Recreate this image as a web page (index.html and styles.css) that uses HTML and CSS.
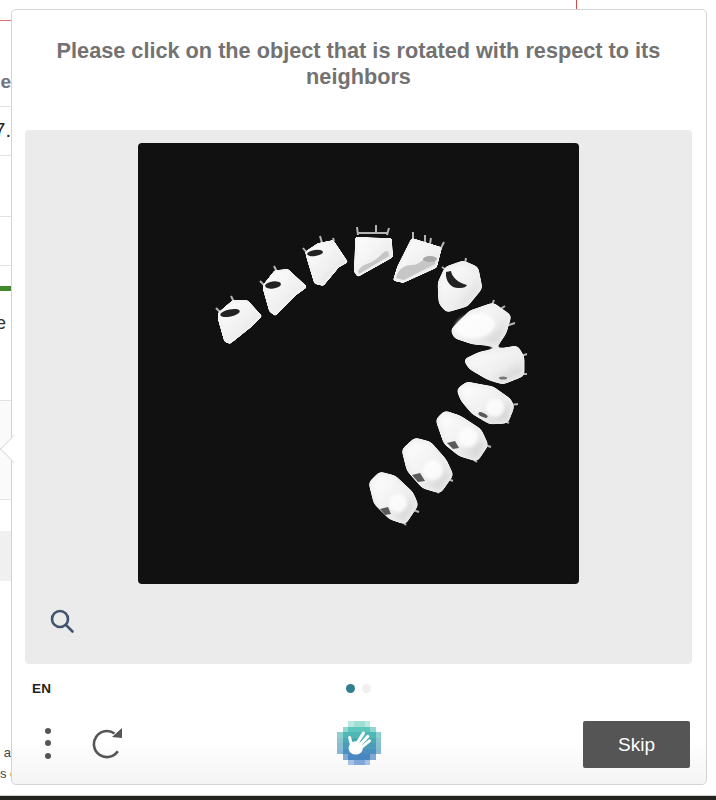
FILE: index.html
```html
<!DOCTYPE html>
<html lang="en">
<head>
    <meta charset="UTF-8">
    <meta name="viewport" content="width=device-width, initial-scale=1.0">
    <title>Challenge</title>
    <link rel="stylesheet" href="styles.css">
</head>
<body>
    <!-- page behind the dialog, only its left edge shows -->
    <div class="backdrop">
        <div class="row row-red"></div>
        <div class="row row-title"><span>Name</span></div>
        <div class="row row-value"><span>17.</span></div>
        <div class="row row-blank"></div>
        <div class="row row-blank2"></div>
        <div class="row-green"></div>
        <div class="row row-text"><span>are</span></div>
        <div class="row row-soft"></div>
        <div class="row row-gap"></div>
        <div class="row row-grey"></div>
        <div class="row-foot">
            <p>a</p>
            <p>s e</p>
        </div>
    </div>
    <div class="red-tick"></div>
    <div class="bottom-bar"></div>

    <div class="dialog">
        <div class="arrow"></div>
        <h1 class="prompt">Please click on the object that is rotated with respect to its neighbors</h1>

        <div class="panel">
            <svg class="picture" viewBox="138 143 441 441" width="441" height="441">
                <defs>
                    <linearGradient id="shade" x1="0" y1="0" x2="1" y2="1">
                        <stop offset="0" stop-color="#ffffff"/>
                        <stop offset="0.6" stop-color="#efefef"/>
                        <stop offset="1" stop-color="#c4c4c4"/>
                    </linearGradient>
                    <filter id="round-sm" x="-5%" y="-5%" width="110%" height="110%">
                        <feGaussianBlur stdDeviation="1.1"/>
                        <feComponentTransfer>
                            <feFuncA type="linear" slope="8" intercept="-3.5"/>
                        </feComponentTransfer>
                        <feGaussianBlur stdDeviation="0.5"/>
                    </filter>
                    <filter id="round-lg" x="-5%" y="-5%" width="110%" height="110%">
                        <feGaussianBlur stdDeviation="2.6"/>
                        <feComponentTransfer>
                            <feFuncA type="linear" slope="10" intercept="-4.5"/>
                        </feComponentTransfer>
                        <feGaussianBlur stdDeviation="0.5"/>
                    </filter>
                    <filter id="soft" x="-5%" y="-5%" width="110%" height="110%">
                        <feGaussianBlur stdDeviation="0.7"/>
                    </filter>
                    <filter id="softer" x="-5%" y="-5%" width="110%" height="110%">
                        <feGaussianBlur stdDeviation="1.6"/>
                    </filter>
                </defs>
                <!-- pins -->
                <g filter="url(#soft)" stroke="#b4b4b4" stroke-width="2" fill="none">
                    <path d="M216 308l4 4M231 296l3 6"/>
                    <path d="M260 281l4 4M274 266l3 6"/>
                    <path d="M303 248l4 5M320 236l2 7M333 238l1 3"/>
                    <path d="M357 227l1 8M376 225v8M389 228l-2 7M358 233h29"/>
                    <path d="M413 232v7M425 235v8M431 238l-1 6M444 242l-3 6"/>
                    <path d="M466 258l-1 6M442 267l4 3"/>
                    <path d="M505 306l-6 4M515 323l-6 2M494 300l-2 5"/>
                    <path d="M527 354l-6 2M527 374h-6"/>
                    <path d="M518 404l-7 1M509 423l-4-2"/>
                    <path d="M491 447l-6-2M477 462l-4-3"/>
                    <path d="M453 481l-5-2M439 493l-3-3"/>
                    <path d="M419 512l-6-2M406 525l-3-3"/>
                </g>
                <!-- bodies -->
                <g filter="url(#round-sm)" fill="url(#shade)" stroke="#f2f2f2" stroke-width="2" stroke-linejoin="round">
                    <polygon points="219,313 233,301 247,301 261,316 250,327 230,343 225,341 219,320"/>
                    <polygon points="264,285 275,271 288,270 306,287 295,295 275,315 270,311 264,290"/>
                    <polygon points="306,252 318,244 333,241 347,262 338,267 323,285 315,283 308,260"/>
                    <polygon points="356,238 391,239 392,257 358,276 355,272"/>
                    <polygon points="412,239 441,248 436,267 403,282 394,280 398,267"/>
                </g>
                <g filter="url(#round-lg)" fill="url(#shade)" stroke="#ededed" stroke-width="3" stroke-linejoin="round">
                    <polygon points="446,268 463,262 477,268 481,288 467,305 447,311 440,303 439,283"/>
                    <polygon points="452,330 470,312 493,304 510,316 505,333 497,345 473,343 455,337"/>
                    <polygon points="465,360 480,353 517,347 523,357 523,375 503,383 487,378 470,368"/>
                    <polygon points="458,390 467,383 493,388 510,400 513,407 507,422 490,423 473,413 462,400"/>
                    <polygon points="437,420 445,412 460,417 480,430 487,445 477,460 460,455 445,443"/>
                    <polygon points="403,450 415,439 430,443 445,460 452,475 440,492 423,487 408,470"/>
                    <polygon points="370,483 380,473 395,477 412,493 417,505 405,523 390,518 375,503"/>
                </g>
                <!-- holes and shading -->
                <g filter="url(#soft)" fill="#222222">
                    <ellipse cx="230" cy="313" rx="10" ry="3.5" transform="rotate(-12 230 313)"/>
                    <ellipse cx="273" cy="285" rx="8" ry="3.5" transform="rotate(-8 273 285)"/>
                    <ellipse cx="315" cy="253" rx="8" ry="3" transform="rotate(-8 315 253)"/>
                    <path d="M446 272C445 282 452 289 460 288 464 288 466 287 467 285 458 283 452 277 451 271Z"/>
                </g>
                <g filter="url(#soft)" fill="#c6c6c6">
                    <path d="M358 271c5-8 10-6 17-11s8-9 13-9l1 5-30 18z"/>
                    <path d="M396 278c2-9 8-13 16-13s12-8 18-9c5 0 6 5 5 8l-31 16z"/>
                    <ellipse cx="430" cy="259" rx="7" ry="3" fill="#a8a8a8"/>
                </g>
                <g filter="url(#softer)" fill="#ffffff" opacity="0.8">
                    <ellipse cx="475" cy="326" rx="20" ry="12" transform="rotate(-8 475 326)"/>
                    <circle cx="495" cy="408" r="9"/>
                    <circle cx="468" cy="437" r="10"/>
                    <circle cx="433" cy="470" r="10"/>
                    <circle cx="398" cy="503" r="9"/>
                </g>
                <g filter="url(#soft)" fill="#5a5a5a">
                    <ellipse cx="503" cy="378" rx="4" ry="1.5" fill="#777777"/>
                    <ellipse cx="483" cy="415" rx="5" ry="2" transform="rotate(25 483 415)"/>
                    <polygon points="447,443 455,441 459,448 453,449"/>
                    <polygon points="412,475 420,473 425,481 418,482"/>
                    <polygon points="380,509 388,507 391,514 385,515"/>
                </g>
            </svg>
            <div class="zoom-row">
                <svg width="26" height="26" viewBox="0 0 26 26" fill="none" stroke="#44546f" stroke-width="2.6" stroke-linecap="round">
                    <circle cx="11" cy="11" r="8"/>
                    <path d="M17 17l6.5 6.5"/>
                </svg>
            </div>
        </div>

        <div class="meta">
            <span class="lang">EN</span>
            <div class="dots">
                <span class="dot active"></span>
                <span class="dot"></span>
            </div>
        </div>

        <div class="footer">
            <div class="tools">
                <div class="menu">
                    <span></span>
                    <span></span>
                    <span></span>
                </div>
                <svg class="reload" width="32" height="32" viewBox="0 0 32 32" fill="none">
                    <path d="M23.5 6.5A13 13 0 1 0 26.8 24.2" stroke="#555555" stroke-width="2.6"/>
                    <polygon points="31,1 31,11 21,10" fill="#555555"/>
                </svg>
            </div>
            <svg class="logo" width="44" height="44" viewBox="0 0 8 8" shape-rendering="crispEdges">
                <rect x="2" y="0" width="4" height="1" fill="#9fdfd4"/>
                <rect x="1" y="1" width="6" height="1" fill="#5fc6bd"/>
                <rect x="0" y="2" width="8" height="1" fill="#4fb8b6"/>
                <rect x="0" y="3" width="8" height="1" fill="#4aa8b4"/>
                <rect x="0" y="4" width="8" height="1" fill="#4a9cb9"/>
                <rect x="0" y="5" width="8" height="1" fill="#4c90c0"/>
                <rect x="1" y="6" width="6" height="1" fill="#4a86c2"/>
                <rect x="2" y="7" width="4" height="1" fill="#7fa8d8"/>
                <rect x="0" y="2" width="1" height="4" fill="#ffffff" opacity="0.35"/>
                <rect x="7" y="2" width="1" height="4" fill="#ffffff" opacity="0.35"/>
                <rect x="1" y="1" width="1" height="1" fill="#ffffff" opacity="0.3"/>
                <rect x="6" y="1" width="1" height="1" fill="#ffffff" opacity="0.3"/>
                <rect x="1" y="6" width="1" height="1" fill="#ffffff" opacity="0.3"/>
                <rect x="6" y="6" width="1" height="1" fill="#ffffff" opacity="0.3"/>
                <rect x="2" y="0" width="1" height="1" fill="#ffffff" opacity="0.3"/>
                <rect x="5" y="0" width="1" height="1" fill="#ffffff" opacity="0.3"/>
                <rect x="2" y="7" width="1" height="1" fill="#ffffff" opacity="0.3"/>
                <rect x="5" y="7" width="1" height="1" fill="#ffffff" opacity="0.3"/>
                <g shape-rendering="auto" stroke="#ffffff" stroke-linecap="round" fill="none" stroke-width="0.55">
                    <path d="M2.7 4.6L2.3 3"/>
                    <path d="M3.5 4.3L4.8 2.2"/>
                    <path d="M3.9 4.6L5.6 2.8"/>
                    <path d="M4.2 5L5.9 3.6"/>
                    <ellipse cx="3.4" cy="4.9" rx="1.1" ry="1" fill="#ffffff" stroke-width="0.4"/>
                </g>
            </svg>
            <button class="skip" type="button">Skip</button>
        </div>
    </div>
</body>
</html>
```
FILE: styles.css
```css
* {
    box-sizing: border-box;
}

html, body {
    height: 100%;
}

body {
    margin: 0;
    padding: 0;
    background-color: #fff;
    font-family: "Liberation Sans", Arial, sans-serif;
    overflow: hidden;
}

/* page behind */
.backdrop {
    width: 11px;
    height: 796px;
    overflow: hidden;
}

.row {
    display: flex;
    justify-content: flex-end;
    align-items: center;
    border-bottom: 1px solid #e2e2e2;
    white-space: nowrap;
    font-size: 20px;
}

.row-red {
    height: 21px;
    border-bottom: 1px solid #e07070;
    margin-bottom: 0;
}

.row-title {
    height: 86px;
    padding-top: 36px;
    color: #6f7480;
    font-weight: bold;
    font-size: 19px;
}

.row-value {
    height: 49px;
    padding-bottom: 1px;
    color: #222;
}

.row-blank {
    height: 61px;
}

.row-blank2 {
    height: 49px;
}

.row-green {
    height: 5px;
    margin-top: 20px;
    background-color: #3f8a2c;
}

.row-text {
    height: 110px;
    padding: 0 5px 44px 0;
    color: #333;
    font-size: 18px;
}

.row-soft {
    height: 99px;
    background-color: #fafafa;
}

.row-gap {
    height: 31px;
    border-bottom: none;
}

.row-grey {
    height: 50px;
    background-color: #f0f0f0;
    border-bottom: none;
}

.row-foot {
    margin-top: 164px;
    text-align: right;
    white-space: nowrap;
    font-size: 13px;
    color: #444;
}

.row-foot p {
    margin: 0 0 5px;
    height: 16px;
}

.red-tick {
    position: absolute;
    left: 576px;
    top: 0;
    width: 1px;
    height: 9px;
    background-color: #d84a4a;
}

.bottom-bar {
    position: absolute;
    left: 0;
    right: 0;
    bottom: 0;
    height: 5px;
    background-color: #22221e;
    border-top: 1px solid #cfcfcf;
}

/* dialog */
.dialog {
    position: absolute;
    left: 11px;
    top: 9px;
    width: 696px;
    height: 776px;
    display: flex;
    flex-direction: column;
    padding: 0 14px 0 13px;
    background: linear-gradient(to bottom, #fff 730px, #f4f4f4 100%);
    border: 1px solid #d4d4d4;
    border-radius: 5px;
}

.arrow {
    position: absolute;
    left: -8px;
    top: 429px;
    width: 20px;
    height: 20px;
    transform: rotate(45deg);
    background-color: #fff;
    border-left: 1px solid #dedede;
    border-bottom: 1px solid #dedede;
}

.prompt {
    height: 120px;
    margin: 0;
    padding: 28px 20px 0;
    color: #727272;
    font-size: 21.7px;
    line-height: 26px;
    font-weight: bold;
    text-align: center;
}

.panel {
    position: relative;
    z-index: 1;
    display: flex;
    flex-direction: column;
    align-items: center;
    height: 534px;
    padding-top: 13px;
    background-color: #ebebeb;
    border-radius: 4px;
}

.picture {
    display: block;
    background-color: #111;
    border-radius: 4px;
}

.zoom-row {
    align-self: flex-start;
    padding: 24px 0 0 24px;
}

.zoom-row svg {
    display: block;
}

.meta {
    position: relative;
    display: flex;
    align-items: center;
    height: 49px;
    padding: 0 0 0 7px;
}

.lang {
    font-size: 13.5px;
    font-weight: bold;
    color: #222;
    letter-spacing: 0.3px;
}

.dots {
    position: absolute;
    left: 321px;
    top: 20px;
    display: flex;
    gap: 7px;
}

.dot {
    width: 9px;
    height: 9px;
    border-radius: 50%;
    background-color: #f0f0f0;
}

.dot.active {
    background-color: #307f8e;
}

.footer {
    position: relative;
    display: flex;
    justify-content: space-between;
    align-items: flex-start;
    padding-top: 8px;
}

.tools {
    display: flex;
    align-items: center;
    gap: 40px;
    padding: 6px 0 0 20px;
}

.menu {
    display: flex;
    flex-direction: column;
    gap: 6.5px;
}

.menu span {
    width: 6px;
    height: 6px;
    border-radius: 50%;
    background-color: #555;
}

.reload {
    display: block;
}

.logo {
    position: absolute;
    left: 312px;
    top: 8px;
}

.skip {
    width: 107px;
    height: 47px;
    margin-right: 2px;
    padding-top: 2px;
    background-color: #555;
    color: #fff;
    border: none;
    border-radius: 2px;
    font-family: "Liberation Sans", Arial, sans-serif;
    font-size: 19px;
}
```
